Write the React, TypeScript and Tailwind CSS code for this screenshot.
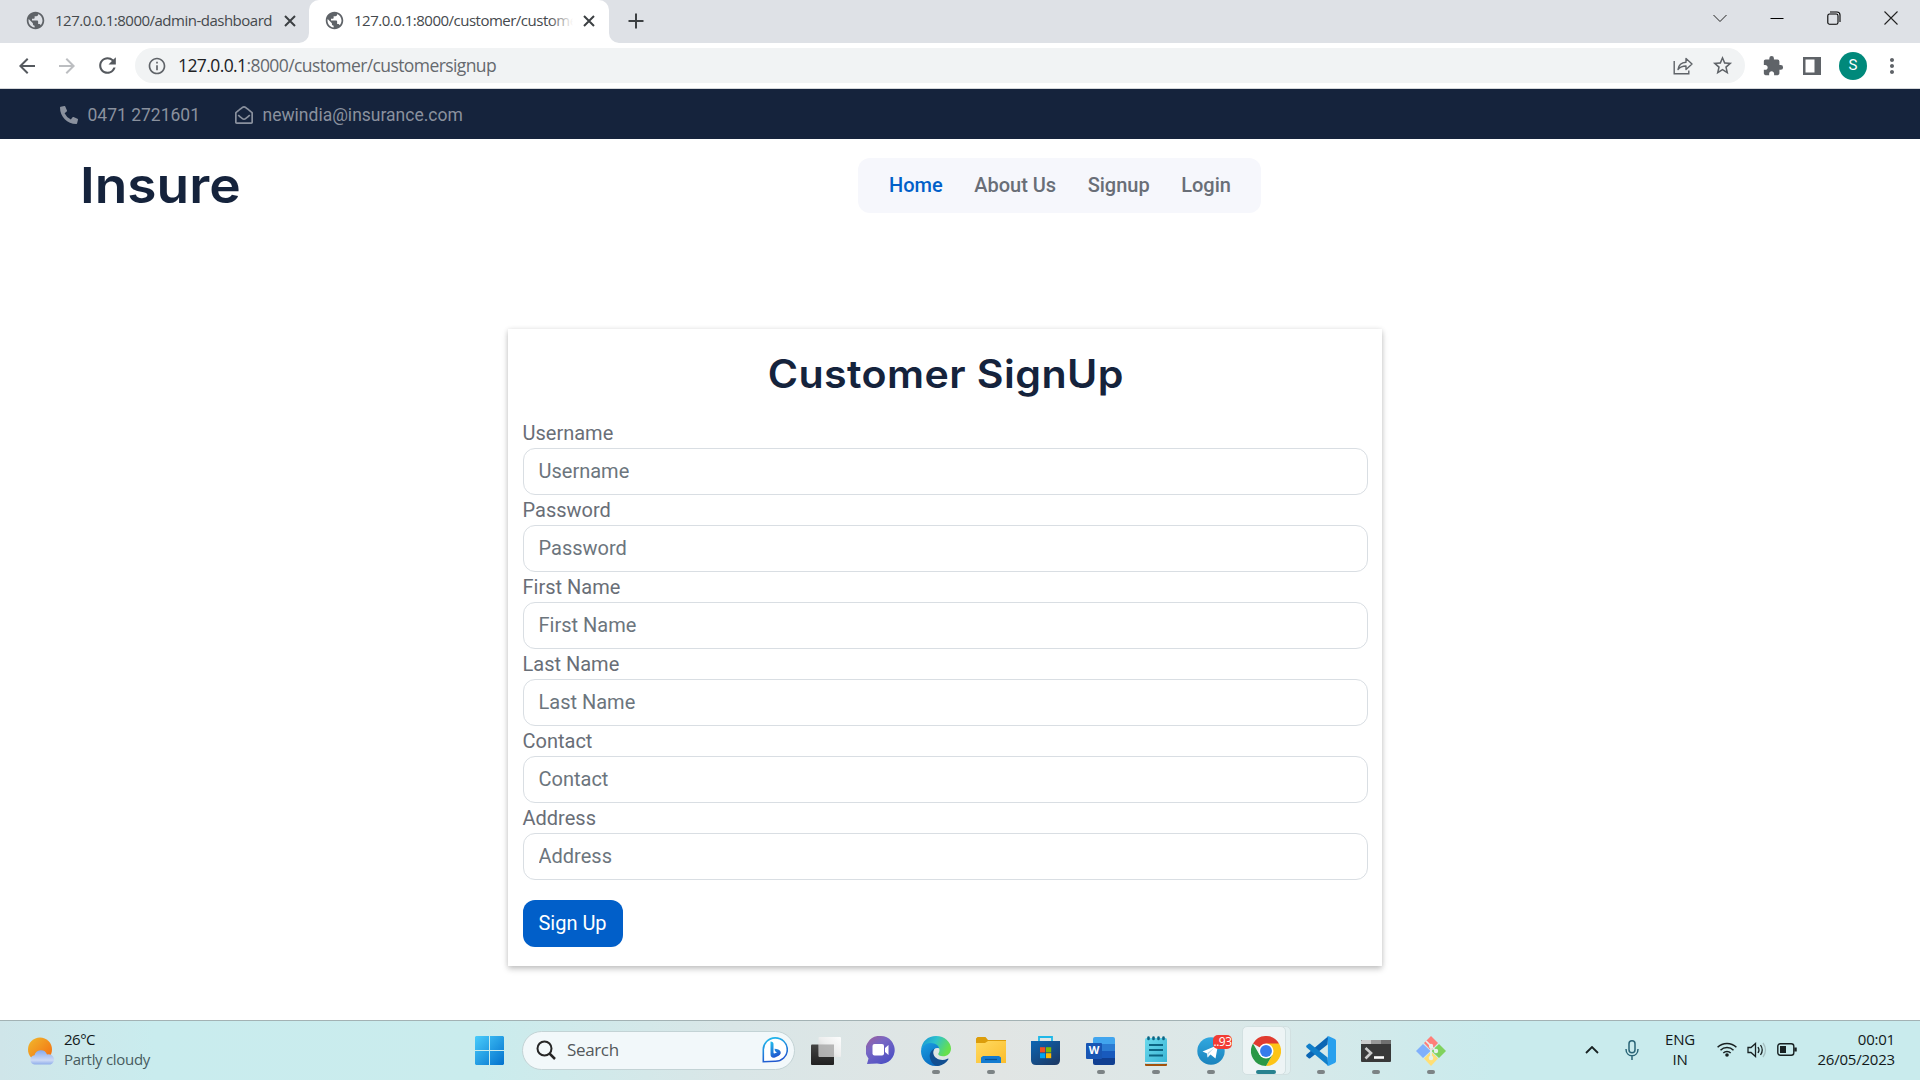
import React from "react";
import { MdPublic, MdExtension, MdInfoOutline, MdStarOutline, MdArrowBack, MdArrowForward, MdRefresh, MdMoreVert } from "react-icons/md";
import { FaPhoneAlt, FaRegEnvelopeOpen } from "react-icons/fa";

const segoe = "font-['Open_Sans','Noto_Sans',sans-serif]";

function Cross({ className = "" }: { className?: string }) {
  return (
    <svg viewBox="0 0 12 12" className={`size-3 shrink-0 ${className}`} fill="none" stroke="#3c4043" strokeWidth="2">
      <path d="M1 1l10 10M11 1L1 11" />
    </svg>
  );
}

function TabStrip() {
  return (
    <div className="flex h-[43px] bg-[#dee1e6]">
      <div className="flex w-[309px] items-center pb-[2px] pl-[25px] pr-[13px]">
        <MdPublic className="size-[21px] shrink-0 text-[#5f6368]" />
        <span className="ml-[9px] w-[224px] whitespace-nowrap text-[15px] tracking-[-0.5px] text-[#45494d]">127.0.0.1:8000/admin-dashboard</span>
        <Cross className="ml-[5px]" />
      </div>
      <div className="relative flex w-[300px] items-center rounded-t-[10px] bg-white pb-[2px] pl-[15px]">
        <svg viewBox="0 0 10 10" className="absolute bottom-0 -left-[10px] size-[10px]"><path d="M10 0V10H0A10 10 0 0 0 10 0" fill="#fff" /></svg>
        <svg viewBox="0 0 10 10" className="absolute bottom-0 -right-[10px] size-[10px]"><path d="M0 0V10H10A10 10 0 0 1 0 0" fill="#fff" /></svg>
        <MdPublic className="size-[21px] shrink-0 text-[#5f6368]" />
        <div className="relative ml-[9px] w-[219px] overflow-hidden whitespace-nowrap text-[15px] tracking-[-0.5px] text-[#45494d]">
          127.0.0.1:8000/customer/custome
          <div className="absolute inset-y-0 right-0 w-6 bg-linear-to-r from-white/0 to-white" />
        </div>
        <Cross className="ml-[10px]" />
      </div>
      <div className="flex flex-1 items-center pb-px pl-[19px]">
        <svg viewBox="0 0 16 16" className="size-4" stroke="#3c4043" strokeWidth="2"><path d="M8 0.5v15M0.5 8h15" /></svg>
      </div>
      <div className="flex w-[207px] items-start justify-between pr-[22px] pt-[11px]">
        <svg viewBox="0 0 14 14" className="size-[14px]" fill="none" stroke="#222" strokeWidth="1"><path d="M0.5 4l6.5 6.5L13.5 4" /></svg>
        <svg viewBox="0 0 14 14" className="size-[14px]" stroke="#000" strokeWidth="1"><path d="M0.5 7.5h13" /></svg>
        <svg viewBox="0 0 14 14" className="size-[14px]" fill="none" stroke="#000" strokeWidth="1.1"><rect x="0.8" y="3" width="10.2" height="10.2" rx="1.8" /><path d="M3 1h7a3 3 0 0 1 3 3v7" /></svg>
        <svg viewBox="0 0 14 14" className="size-[14px]" stroke="#222" strokeWidth="1.1"><path d="M0.5 0.5l13 13M13.5 0.5l-13 13" /></svg>
      </div>
    </div>
  );
}

function AddressBar() {
  return (
    <div className="flex h-[46px] items-center border-b border-[#d5d7da] bg-white">
      <MdArrowBack className="ml-[15px] size-[24px] text-[#55595e]" />
      <MdArrowForward className="ml-[16px] size-[24px] text-[#bcbec1]" />
      <MdRefresh className="ml-[16px] size-[25px] text-[#55595e]" />
      <div className="ml-[15px] flex h-[35px] w-[1610px] items-center rounded-full bg-[#f1f3f4] pl-[12px] pr-[11px]">
        <MdInfoOutline className="size-[20px] text-[#5f6368]" />
        <span className="ml-[11px] flex-1 whitespace-nowrap text-[17.5px] tracking-[-0.59px] text-[#65696e]"><span className="text-[#202124]">127.0.0.1</span>:8000/customer/customersignup</span>
        <svg viewBox="0 0 20 20" className="mr-[18px] size-[20px]" fill="none" stroke="#5f6368" strokeWidth="1.4"><path d="M1.2 5v12.8h14.6V14.5" /><path d="M5 13.5c.6-4.3 3-7 8-7.300V2.500l6 5.500-6 5.500V10c-3.600 0-6 1-8 3.500z" strokeLinejoin="round" /></svg>
        <MdStarOutline className="size-[23px] text-[#5f6368]" />
      </div>
      <MdExtension className="ml-[17px] size-[22px] text-[#5f6368]" />
      <svg viewBox="0 0 18 18" className="ml-[19px] size-[18px]"><path d="M0 0h18v18H0zM2.500 2.500v13h9v-13z" fillRule="evenodd" fill="#5f6368" /></svg>
      <div className="ml-[18px] flex size-[28px] items-center justify-center rounded-full bg-[#00897b] font-[Roboto,sans-serif] text-[15px] text-white">S</div>
      <MdMoreVert className="ml-[13px] size-[24px] text-[#5f6368]" />
    </div>
  );
}

const fields = ["Username", "Password", "First Name", "Last Name", "Contact", "Address"];

function Page() {
  return (
    <div className="flex h-[931px] flex-col bg-white font-[Roboto,sans-serif] text-[20px] leading-[30px] text-[#696e77]">
      <div className="flex h-[50px] items-center bg-[#15233c] pl-[60px] pt-px text-[17.5px] text-[#8a919e]">
        <FaPhoneAlt className="size-[18px]" />
        <span className="ml-[9.5px] w-[138px]">0471 2721601</span>
        <FaRegEnvelopeOpen className="ml-[9.5px] size-[18px]" />
        <span className="ml-[9.500px]">newindia@insurance.com</span>
      </div>
      <div className="flex h-[93px] items-center pl-[80px]">
        <div className="w-[778px] pb-[2px] font-[Inter,sans-serif] text-[50px] font-semibold leading-[60px] text-[#15233c]">
          <span className="inline-block origin-left scale-x-[1.065]">Insure</span>
        </div>
        <nav className="flex h-[55px] items-center gap-[31.500px] rounded-[12px] bg-[#f6f7fc] pb-px pl-[31px] pr-[30px] font-medium">
          <span className="text-[#015fc9]">Home</span>
          <span>About Us</span>
          <span>Signup</span>
          <span>Login</span>
        </nav>
      </div>
      <form className="ml-[508px] mt-[97px] flex h-[637px] w-[874px] flex-col bg-white pl-[14.500px] pr-[14px] shadow-[0_3px_6px_rgba(0,0,0,0.22),0_0_5px_rgba(0,0,0,0.08)]">
        <h1 className="mb-[18.500px] mt-[20px] scale-x-[1.055] text-center font-[Inter,sans-serif] text-[39px] font-semibold leading-[50px] tracking-[0.4px] text-[#15233c]">Customer SignUp</h1>
        {fields.map((name) => (
          <label key={name} className="block h-[77px]">
            <span className="block h-[30px]">{name}</span>
            <input placeholder={name} className="block h-[47px] w-full rounded-[12px] border border-[#d9dee3] px-[15px] placeholder:text-[#6c757d]" />
          </label>
        ))}
        <button type="button" className="mt-[20px] h-[47px] w-[100px] rounded-[12px] bg-[#015fc9] text-white">Sign Up</button>
      </form>
    </div>
  );
}

function Slot({ children, running = true }: { children: React.ReactNode; running?: boolean }) {
  return (
    <div className="relative flex h-[60px] w-[55px] shrink-0 items-center justify-center">
      {children}
      {running && <div className="absolute bottom-[7px] h-[4px] w-[8px] rounded-full bg-[#7c8385]" />}
    </div>
  );
}

function Taskbar() {
  return (
    <div className={`flex h-[60px] items-center border-t border-[#a3b2b4] bg-[linear-gradient(90deg,#cfe5e9_0%,#c9ecee_8%,#caeced_25%,#d9e6e7_38%,#e1e5e4_52%,#dce8e8_63%,#c9ebed_78%,#c9ebed_100%)] ${segoe}`}>
      <div className="flex w-[462px] items-center pl-[27px]">
        <svg viewBox="0 0 28 28" className="size-[28px]">
          <defs>
            <linearGradient id="sun" x1="0" y1="0" x2="1" y2="1"><stop stopColor="#f0b92d" /><stop offset="1" stopColor="#f4690f" /></linearGradient>
            <linearGradient id="cloud" x1="0" y1="0" x2="0" y2="1"><stop stopColor="#86a9ec" /><stop offset=".7" stopColor="#cddaf5" /><stop offset="1" stopColor="#8fadeb" /></linearGradient>
          </defs>
          <circle cx="13" cy="12.500" r="12" fill="url(#sun)" />
          <path d="M7.500 27.500a4.700 4.700 0 0 1 0-9.300 6.500 6.500 0 0 1 12.500-.6 5 5 0 0 1 3.500 9.900z" fill="url(#cloud)" />
        </svg>
        <div className="ml-[9px] pb-[4px] text-[15px] leading-[20px] text-[#485c5f]">
          <div className="tracking-[-0.5px] text-[#12191a]">26°C</div>
          <div className="tracking-[-0.3px]">Partly cloudy</div>
        </div>
      </div>
      <Slot running={false}>
        <svg viewBox="0 0 29 29" className="size-[29px]">
          <defs><linearGradient id="win" x1="0" y1="0" x2="1" y2="1"><stop stopColor="#49ccfb" /><stop offset="1" stopColor="#0271cd" /></linearGradient></defs>
          <path d="M1 0h13v14H0V1zM15 0h13l1 1v13H15zM0 15h14v14H1l-1-1zM15 15h14v13l-1 1H15z" fill="url(#win)" />
        </svg>
      </Slot>
      <div className="mb-px ml-[5px] mr-[3px] flex h-[39px] w-[273px] shrink-0 items-center rounded-full border border-[#c3d3d5] bg-[#f2f8fa] pl-[13px] pr-[6px]">
        <svg viewBox="0 0 20 20" className="size-[20px]" fill="none" stroke="#262626" strokeWidth="2"><circle cx="8.500" cy="8.500" r="7" /><path d="M13.500 13.500l5.500 5.500" strokeWidth="2.500" /></svg>
        <span className="ml-[11px] flex-1 text-[17px] tracking-[-0.35px] text-[#54595b]">Search</span>
        <svg viewBox="0 0 26 26" className="size-[26px]">
          <defs><linearGradient id="bing" x1="0" y1="0" x2=".3" y2="1"><stop stopColor="#22c0ee" /><stop offset="1" stopColor="#2059cf" /></linearGradient></defs>
          <path d="M1.300 24.700V13A12 11.700 0 1 1 13 24.300z" fill="#fff" stroke="url(#bing)" strokeWidth="1.600" />
          <path d="M8.500 4.500q3 0 3 2.500v8.500q0 1.500 2.200.6l1.300-.6-1.300-.8q-1.200-1-1.200-3 4.500 0 6 2.800 1 2.500-1.800 4.200L13 20.600q-4.500 1-4.500-3.600z" fill="url(#bing)" />
        </svg>
      </div>
      <Slot running={false}>
        <svg viewBox="0 0 30 28" className="h-[28px] w-[30px]">
          <defs>
            <linearGradient id="tvd" x1="0" y1="0" x2="0" y2="1"><stop stopColor="#444" /><stop offset="1" stopColor="#202020" /></linearGradient>
            <linearGradient id="tvl" x1="0" y1="1" x2="1" y2="0"><stop stopColor="#c9c9c9" /><stop offset=".5" stopColor="#eee" /><stop offset="1" stopColor="#fff" /></linearGradient>
          </defs>
          <rect x="0" y="7.500" width="23" height="20.500" rx="1" fill="url(#tvd)" />
          <rect x="7.500" y="0" width="22.500" height="20" rx="1" fill="url(#tvl)" opacity=".93" />
          <path d="M8 7.500h15V20H8z" fill="#aaa" opacity=".8" />
        </svg>
      </Slot>
      <Slot running={false}>
        <svg viewBox="0 0 29 29" className="size-[29px]">
          <defs><linearGradient id="chat" x1="0" y1="0" x2=".7" y2="1"><stop stopColor="#a05e98" /><stop offset=".4" stopColor="#7867c4" /><stop offset="1" stopColor="#4d50c4" /></linearGradient></defs>
          <path d="M15 0a14 14 0 1 1-4 27.500L1 28l1.500-5.500A14 14 0 0 1 15 0z" fill="url(#chat)" />
          <rect x="6.500" y="8" width="11.500" height="11.500" rx="2" fill="#fff" /><path d="M19 12l3.500-3v10L19 16z" fill="#fff" />
        </svg>
      </Slot>
      <Slot>
        <svg viewBox="0 0 30 30" className="size-[30px]">
          <defs>
            <linearGradient id="edgeA" x1="0" y1="0" x2="1" y2=".4"><stop stopColor="#168fd6" /><stop offset=".5" stopColor="#2ec2cc" /><stop offset="1" stopColor="#67e04c" /></linearGradient>
            <linearGradient id="edgeB" x1="0" y1="0" x2=".6" y2="1"><stop stopColor="#1b9fe2" /><stop offset="1" stopColor="#0767bd" /></linearGradient>
          </defs>
          <path d="M0 14C1 5 7 0 15 0c9 0 15 6.500 15 12.500 0 5-3.800 7.800-8 7.800-3.200 0-4.800-1.200-4.800-2.300 0-.8 1.300-1.500 1.300-4C18.500 10.500 15 8 10 8 5 8 1.500 11 0 14z" fill="url(#edgeA)" />
          <path d="M0 15c.5-5 5-8 9.500-8 5 0 8.500 2.800 8.800 5.500C15 11 12 13 12 17c0 6 5 10 11 9-2 2.500-5 4-8.500 4C6 30 0 23 0 15z" fill="url(#edgeB)" />
          <path d="M13.500 12.500C10 14.500 8 18 9 22c1 4.500 4 7.500 7.500 8 5-.4 9-3.500 10.800-6.500.4-.8 0-1.200-.8-.8-6 3-13.500 0-14.200-5.500-.2-2 .2-3.500 1.200-4.700z" fill="#124f91" />
        </svg>
      </Slot>
      <Slot>
        <svg viewBox="0 0 30 27" className="h-[27px] w-[30px]">
          <defs><linearGradient id="fold" x1="0" y1="0" x2="1" y2="1"><stop stopColor="#ffda61" /><stop offset="1" stopColor="#fbbd2c" /></linearGradient></defs>
          <path d="M0 1.500L1.500 0h8l2.500 3h18v5H0z" fill="#dc9d0b" />
          <path d="M0 6h9l3-2h18v22H0z" fill="url(#fold)" />
          <path d="M5 26v-5.500L7 19h16l2 1.500V26z" fill="#137bd0" /><path d="M9 22.500h12" stroke="#075395" strokeWidth="1.200" />
        </svg>
      </Slot>
      <Slot running={false}>
        <svg viewBox="0 0 29 29" className="size-[29px]">
          <defs><linearGradient id="store" x1="0" y1="0" x2=".8" y2="1"><stop stopColor="#0b66b4" /><stop offset="1" stopColor="#1c3b68" /></linearGradient></defs>
          <path d="M8 6V1h13v5" fill="none" stroke="#20b8e8" strokeWidth="1.800" />
          <path d="M0 5h29v19q0 5-5 5H5q-5 0-5-5z" fill="url(#store)" />
          <path d="M9 11.200h5.200v5.200H9z" fill="#f25022" /><path d="M15 11.200h5.200v5.200H15z" fill="#7fba00" /><path d="M9 17.200h5.200v5H9z" fill="#00a4ef" /><path d="M15 17.200h5.200v5H15z" fill="#ffb900" />
        </svg>
      </Slot>
      <Slot>
        <div className="relative h-[28px] w-[29px]">
          <div className="ml-[7px] flex h-full flex-col overflow-hidden rounded-[2px]">
            <div className="flex-1 bg-[#41a5ee]" /><div className="flex-1 bg-[#2b7cd3]" /><div className="flex-1 bg-[#185abd]" /><div className="flex-1 bg-[#103f91]" />
          </div>
          <div className="absolute left-0 top-[6px] flex size-[16px] items-center justify-center rounded-[1px] bg-[#1856b4] text-[11px] font-bold text-white">W</div>
        </div>
      </Slot>
      <Slot>
        <svg viewBox="0 0 22 30" className="h-[30px] w-[22px]">
          <defs><linearGradient id="note" x1="0" y1="0" x2="1" y2="1"><stop stopColor="#6bd9ec" /><stop offset="1" stopColor="#38b4d5" /></linearGradient></defs>
          <rect y="25" width="22" height="5" rx="1" fill="#a3510b" /><rect y="2" width="22" height="26" rx="1.500" fill="url(#note)" /><path d="M0 26.800h22" stroke="#e8f2f2" strokeWidth="1.500" />
          <path d="M4 9h14M4 14h14M4 19.500h14" stroke="#0c6584" strokeWidth="1.800" />
          <path d="M3.500 1.500v1.500M8.500 1.500v1.500M13.500 1.500v1.500M18.500 1.500v1.500" stroke="#0c6584" strokeWidth="2.600" strokeLinecap="round" />
        </svg>
      </Slot>
      <Slot>
        <svg viewBox="0 0 28 28" className="size-[28px]">
          <defs><linearGradient id="tg" x1="0" y1="0" x2="0" y2="1"><stop stopColor="#32a8df" /><stop offset="1" stopColor="#1a83bd" /></linearGradient></defs>
          <circle cx="14" cy="14" r="13.700" fill="url(#tg)" /><path d="M5.500 14.500L21 8l-2.500 13.500-5-4-3 3-.5-4z" fill="#fff" /><path d="M10.500 16l7-5.500-6 6.500-.5 4z" fill="#b8d7e9" />
        </svg>
        <div className="absolute left-[30px] top-[14px] flex h-[14px] w-[19px] items-center justify-center rounded-[5px] bg-[#f23c34] text-[12px] tracking-[-0.5px] text-white">..93</div>
      </Slot>
      <Slot running={false}>
        <div className="absolute left-[8px] top-[5px] h-[49px] w-[45px] rounded-[5px] border border-[#d2e0e1] bg-[#e3f0f1]" />
        <div className="absolute left-[4px] top-[5px] h-[49px] w-[44px] rounded-[5px] border border-[#d2e0e1] bg-[#edf4f5]" />
        <svg viewBox="0 0 48 48" className="relative size-[30px]">
          <path d="M24 24L3.200 12A24 24 0 0 1 44.800 12z" fill="#e03b2f" />
          <path d="M24 12h20.800A24 24 0 0 1 24 48L34.400 30z" fill="#fdc417" />
          <path d="M3.200 12A24 24 0 0 0 24 48L34.400 30H13.600z" fill="#2a9846" />
          <circle cx="24" cy="24" r="12" fill="#fff" /><circle cx="24" cy="24" r="9.500" fill="#367cec" />
        </svg>
        <div className="absolute bottom-[7px] left-[18px] h-[4px] w-[20px] rounded-full bg-[#28828f]" />
      </Slot>
      <Slot>
        <svg viewBox="0 0 100 100" className="size-[30px]">
          <path d="M72 28L14 74q-3 2-5 0L2 68q-3-2 0-6L74 1z" fill="#0b65b4" />
          <path d="M72 72L14 26q-3-2-5 0L2 32q-3 2 0 6L74 99z" fill="#117fca" />
          <path d="M71 99Q75 100 78 98L96 90Q100 88 100 84V16Q100 12 96 10L78 2Q75 0 71 2L73 8V92z" fill="#29a0ee" />
        </svg>
      </Slot>
      <Slot>
        <svg viewBox="0 0 30 22" className="h-[22px] w-[30px]">
          <rect width="30" height="22" rx="1" fill="#393939" /><path d="M0 1l1-1h9v4H0z" fill="#ccc" /><path d="M10 0h10v4H10z" fill="#999" /><path d="M20 0h9l1 1v3H20z" fill="#707070" />
          <path d="M4.500 8l5.500 5-5.500 5.500" fill="none" stroke="#ccc" strokeWidth="2.600" /><path d="M13 17.500h10" stroke="#fff" strokeWidth="2.600" />
        </svg>
      </Slot>
      <Slot>
        <svg viewBox="0 0 30 30" className="size-[30px]">
          <path d="M15 0l7 7-7 7.500L8 7z" fill="#ff7e78" /><path d="M23 8l7 7-7 7-7.500-7z" fill="#80d25d" /><path d="M7 8l7.500 7L7 22l-7-7z" fill="#80b0fb" /><path d="M15 15.500l7 7-7 7.500-7-7.500z" fill="#ffdf76" />
          <path d="M10 5l5 5v13M15 10l5 5" stroke="#e5f1ee" strokeWidth="1.700" fill="none" /><circle cx="15" cy="10" r="2.200" fill="#e5f1ee" /><circle cx="20" cy="15" r="2.200" fill="#e5f1ee" /><circle cx="15" cy="22" r="2.300" fill="#e5f1ee" />
        </svg>
      </Slot>
      <div className="flex flex-1 items-center justify-end pr-[25px] text-[15px] leading-[20px] text-[#12191a]">
        <svg viewBox="0 0 14 8" className="mb-[2px] h-[8px] w-[14px]" fill="none" stroke="#182122" strokeWidth="1.800"><path d="M1 7l6-6 6 6" /></svg>
        <svg viewBox="0 0 14 20" className="mb-[2px] ml-[26px] h-[20px] w-[14px]" fill="none" stroke="#2a6577" strokeWidth="1.500"><rect x="4" y="0.800" width="6" height="12" rx="3" /><path d="M1 9c0 9 12 9 12 0M7 15.500V20" /></svg>
        <div className="mb-[3px] ml-[25px] w-[32px] text-center tracking-[-0.2px]">ENG<br />IN</div>
        <svg viewBox="0 0 20 15" className="mb-[2px] ml-[21px] h-[15px] w-[20px]" fill="none" stroke="#182122" strokeWidth="1.500"><path d="M.6 5.300a13.300 13.300 0 0 1 18.800 0M3.500 8.300a9.200 9.200 0 0 1 13 0M6.300 11a5.300 5.300 0 0 1 7.400 0" /><circle cx="10" cy="13" r="1.800" fill="#182122" stroke="none" /></svg>
        <svg viewBox="0 0 20 16" className="mb-[2px] ml-[10px] h-[16px] w-[20px]" fill="none" stroke="#182122" strokeWidth="1.300"><path d="M1 5.500h3L8.500 1.500v13L4 10.500H1z" /><path d="M11 5q2 3 0 6M13.500 3q3.500 5 0 10" /><path d="M16 1q5 7 0 14" stroke="#a6bfc1" /></svg>
        <svg viewBox="0 0 20 13" className="mb-[2px] ml-[10px] h-[13px] w-[20px]" fill="none" stroke="#182122" strokeWidth="1.400"><rect x=".8" y=".8" width="16" height="11.400" rx="2.500" /><path d="M18.500 4.500v4" strokeWidth="2.500" /><path d="M3 3h6v7H3z" fill="#182122" stroke="none" /></svg>
        <div className="mb-[4px] ml-[20px] w-[78px] whitespace-nowrap text-right tracking-[-0.2px]">00:01<br />26/05/2023</div>
      </div>
    </div>
  );
}

export default function App() {
  return (
    <div className={`flex h-[1080px] w-[1920px] flex-col overflow-hidden ${segoe}`}>
      <TabStrip />
      <AddressBar />
      <Page />
      <Taskbar />
    </div>
  );
}
